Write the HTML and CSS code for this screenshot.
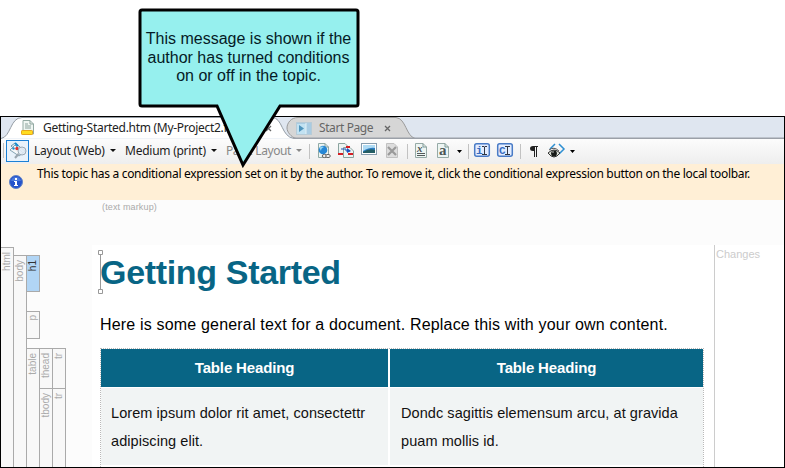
FILE: index.html
```html
<!DOCTYPE html>
<html lang="en">
<head>
<meta charset="utf-8">
<title>Getting-Started.htm</title>
<link rel="stylesheet" href="styles.css">
</head>
<body>
<div class="window">
  <div class="tabs">
    <svg class="tab-shapes" width="783" height="22" viewBox="0 0 783 22">
      <path d="M295 21.500C290 20 286 15 286 11C286 6 290 .5 297 .5H395C405 1.500 405 19 414 21.500" fill="#d6d6d6" stroke="#9a9a9a"/>
      <path d="M0 21.500C10 20 9 .5 21 .5H271C282 .5 280 20 293 21.500" fill="#fff" stroke="#939ba3"/>
      <path d="M293 21.500H783" stroke="#9ba0a8" stroke-width="2"/>
    </svg>
    <div class="tab first">
      <svg width="14" height="17" viewBox="0 0 14 17"><path d="M2 .5H9L12.500 4V14H2Z" fill="#f0f6f2" stroke="#93aaa3"/><path d="M9 .5V4H12.500M4 4H7M4 6H10M4 8H10" fill="none" stroke="#8ca39d"/><rect x=".5" y="10.500" width="11" height="4" rx=".7" fill="#ffdc20" stroke="#e6a51b"/></svg>
      <span class="t1">Getting-Started.htm (My-Project2.flprj)</span>
      <svg class="close" width="7" height="7" viewBox="0 0 7 7"><path d="M1 1L6 6M6 1L1 6" stroke="#666" stroke-width="1.300"/></svg>
    </div>
    <div class="tab second">
      <svg width="16" height="13" viewBox="0 0 16 13"><rect x=".5" y=".5" width="15" height="12" fill="#a9cce3" stroke="#b7cbd7"/><path d="M1 2H10V12H1Z" fill="#c2e2f2"/><path d="M3 3L8 6.500L3 10Z" fill="#5095bd"/><path d="M10 1V12" stroke="#e3f0f6"/></svg>
      <span class="t2">Start Page</span>
      <svg class="close" width="7" height="7" viewBox="0 0 7 7"><path d="M1 1L6 6M6 1L1 6" stroke="#666" stroke-width="1.300"/></svg>
    </div>
  </div>
  <div class="toolbar">
    <i class="grip"></i>
    <span class="toggle"><svg width="20" height="19" viewBox="0 0 20 19"><path d="M3 5L7 2L17 10L13 14Z" fill="#e2eef4" stroke="#719aaf"/><path d="M2 9L7 4L15 12L11 15Z" fill="#f5f8fa" stroke="#84a3b2"/><path d="M7 2L10 5" stroke="#168bd0" stroke-width="2"/><circle cx="5.500" cy="7.500" r="1.200" fill="#218cca"/><circle cx="9" cy="7.500" r="1.700" fill="#df352e"/><circle cx="14" cy="10" r="4" fill="#e1ebf5" fill-opacity=".9" stroke="#9aa9b5"/><path d="M10.500 13L7 17" stroke="#9aa6af" stroke-width="2"/></svg></span>
    <span class="label l1">Layout (Web)</span><i class="arrow a1"></i>
    <span class="label l2">Medium (print)</span><i class="arrow a2"></i>
    <span class="label l3">Page Layout</span><i class="arrow a3"></i>
    <svg class="icons" width="270" height="20" viewBox="308 141 270 20">
      <g fill="none" stroke="#c2c2c2"><path d="M309.500 144V159M407.500 144V159M468.500 144V159M520.500 144V159"/></g>
      <path d="M318.500 143.500H325L328.500 147V157.500H318.500Z" fill="#eef5f3" stroke="#91aaa6"/><path d="M325 143.500V147H328.500" fill="none" stroke="#829b98"/><circle cx="323" cy="150" r="4.300" fill="#2687d5"/><path d="M319.500 148Q321 145.500 324 147Q321 148 321 151Z" fill="#96d8f5"/><g fill="#eee" stroke="#666"><ellipse cx="324.500" cy="156" rx="2.300" ry="1.600"/><ellipse cx="328" cy="156" rx="2.300" ry="1.600"/></g>
      <path d="M338.500 143.500H345L348.500 147V153.500H338.500Z" fill="#edf3f2" stroke="#8ba49f"/><path d="M343.500 147.500H350L353.500 151V157.500H343.500Z" fill="#edf3f2" stroke="#8ba49f"/><path d="M341 149H346V151H350" fill="none" stroke="#1b54bd"/><path d="M347 148L351 151L347 153Z" fill="#1b54bd"/><path d="M338 154H343M346 147H350M348 154H353" stroke="#d51f25" stroke-width="2"/>
      <rect x="361.500" y="143.500" width="15" height="11" fill="#fff" stroke="#879dae"/><rect x="363" y="145" width="12" height="8" fill="#2b7dc3"/><path d="M363 145H375V148Q370 147 363 151Z" fill="#afdbf4"/><path d="M363 152Q369 148 375 150V153H363Z" fill="#245e65"/>
      <path d="M386.500 143.500H394L397.500 147V157.500H386.500Z" fill="#ddd" stroke="#c1c1c1"/><path d="M388 147L396 155M396 147L388 155" stroke="#999" stroke-width="2.200"/>
      <path d="M415.500 143.500H423L426.500 147V157.500H415.500ZM437.500 143.500H445L448.500 147V157.500H437.500Z" fill="#edf5f3" stroke="#96aaa6"/><path d="M423 143.500V147H426.500M445 143.500V147H448.500" fill="none" stroke="#7c9793"/>
      <text class="glyph x" x="417" y="152">x</text><path d="M417 153.500H425M417 155.500H425" stroke="#525a5a"/>
      <text class="glyph a" x="439" y="155">a</text>
      <path d="M457 150H462L459.500 153ZM570 150H575L572.500 153Z" fill="#000"/>
      <g fill="#e3edff" stroke="#497bc6" stroke-width="1.500"><rect x="474.700" y="143.700" width="14.600" height="12.600" rx="2"/><rect x="497.700" y="143.700" width="14.600" height="12.600" rx="2"/></g>
      <text class="glyph blue" x="476" y="154">i</text><text class="glyph blue" x="499" y="154">C</text>
      <path d="M482 146.500H484L484.500 147L485 146.500H487M484.500 147V154M482 154.500H487M505 146.500H510M507.500 147V154M505 154.500H510" fill="none" stroke="#303743"/>
      <path d="M538 146.500H533M534.500 146V157M536.500 146V157" stroke="#222" fill="none"/><path d="M535 146H533Q530 146 530 148.500Q530 151 533 151H535Z" fill="#222"/>
      <path d="M555 144L550 149M559 144L564 149L559 154" fill="none" stroke="#2e8fd2" stroke-width="1.500"/><path d="M548 153Q554 147 560 153Q554 161 548 153Z" fill="#d9ddd4" stroke="#333"/><circle cx="554" cy="153.500" r="2.900" fill="#171a17"/><circle cx="553" cy="152" r=".7" fill="#fff"/><path d="M549 150Q554 146 559 151" stroke="#555" fill="none"/>
    </svg>
  </div>
  <div class="notice">
    <svg width="14" height="14" viewBox="0 0 14 14"><circle cx="7" cy="7" r="6.500" fill="#2553cb" stroke="#6284c6"/><path d="M2 6Q3 2 7 2Q11 2 12 6" fill="#4b79dc"/><rect x="6" y="3" width="2" height="2" fill="#fff"/><path d="M5 6H8V10H9V11H5V10H6V7H5Z" fill="#fff"/></svg>
    <span>This topic has a conditional expression set on it by the author. To remove it, click the conditional expression button on the local toolbar.</span>
  </div>
  <div class="editor">
    <div class="markup"><span>(text markup)</span></div>
    <div class="work">
      <div class="structure">
        <div class="tag html">html</div>
        <div class="tag body">body</div>
        <div class="blocks">
          <div class="tag h1">h1</div>
          <div class="tag p">p</div>
          <div class="table-tags">
            <div class="tag table">table</div>
            <div class="sections">
              <div class="head-tags"><div class="tag">thead</div><div class="tag">tr</div></div>
              <div class="body-tags"><div class="tag">tbody</div><div class="tag">tr</div></div>
            </div>
          </div>
        </div>
      </div>
      <div class="page">
        <svg class="caret" width="5" height="44" viewBox="0 0 5 44"><path d="M2.500 4V40M.5 .5H4.500V4.500H.5ZM.5 39.500H4.500V43.500H.5Z" fill="#fff" stroke="#999"/></svg>
        <h1>Getting Started</h1>
        <p>Here is some general text for a document. Replace this with your own content.</p>
        <div class="grid">
          <div class="cell head">Table Heading</div><div class="cell head">Table Heading</div>
          <div class="cell"><span class="c1">Lorem ipsum dolor rit amet, consectettr</span><br><span class="c2">adipiscing elit.</span></div>
          <div class="cell right"><span class="c3">Dondc sagittis elemensum arcu, at gravida</span><br><span class="c4">puam mollis id.</span></div>
        </div>
      </div>
      <div class="changes">Changes</div>
    </div>
  </div>
</div>
<div class="callout">
  <svg width="222" height="160" viewBox="0 0 222 160"><path d="M4 2H218Q220 2 220 4V96Q220 98 218 98H142L105 157L79 98H4Q2 98 2 96V4Q2 2 4 2Z" fill="#96f0ee" stroke="#000" stroke-width="3"/></svg>
  <div class="callout-text"><span>This message is shown if the</span><br><span>author has turned conditions</span><br><span>on or off in the topic.</span></div>
</div>
</body>
</html>
```
FILE: styles.css
```css
* { box-sizing: border-box; }
body { margin: 0; width: 785px; height: 468px; overflow: hidden; padding-top: 116px; background: #fff; position: relative; font-family: "Liberation Sans", sans-serif; }
svg { display: block; flex: none; }
.window { width: 785px; height: 352px; border: 1px solid #000; display: flex; flex-direction: column; overflow: hidden; }
.tabs { height: 22px; flex: none; background: #dfe6f0; display: flex; position: relative; font: 12px/22px "Noto Sans", sans-serif; white-space: nowrap; }
.tab-shapes { position: absolute; left: 0; top: 0; }
.tab { position: relative; display: flex; align-items: center; height: 22px; }
.first { width: 275px; padding-left: 20px; color: #222; }
.first span { margin-left: 8px; width: 213px; overflow: hidden; }
.first .close { margin-left: 9px; }
.second { padding-left: 20px; color: #666; }
.second span { width: 56px; margin-left: 7px; }
.second .close { margin-left: 9px; }
.t1 { letter-spacing: -.29px; }
.t2 { letter-spacing: -.4px; }
.toolbar { height: 25px; flex: none; background: linear-gradient(#fcfcfc, #eee); display: flex; align-items: center; padding-bottom: 2px; font: 12px/23px "Noto Sans", sans-serif; color: #1c1c1c; white-space: nowrap; }
.grip { width: 1px; height: 15px; background: #c2c2c2; margin-left: 2px; }
.toggle { width: 23px; height: 22px; border: 1px solid #1b80d5; background: #e8f2fb; margin-left: 2px; display: grid; place-items: center; flex: none; }
.label { flex: none; }
.l1 { width: 76px; margin-left: 5px; letter-spacing: -.24px; }
.l2 { width: 86px; margin-left: 9px; letter-spacing: -.25px; }
.l3 { width: 70px; margin-left: 9px; color: #888; letter-spacing: -.4px; }
.arrow { border: 3px solid transparent; border-top-color: #111; border-bottom: 0; width: 6px; flex: none; }
.a3 { border-top-color: #888; margin-right: 6px; }
.glyph { font: bold 11px "Liberation Serif", serif; fill: #4c5555; }
.glyph.x { font-style: italic; }
.glyph.a { font-size: 15px; }
.glyph.blue { font: bold 11px "Liberation Mono", monospace; fill: #386dc0; }
.notice { height: 36px; flex: none; background: #ffefd6; display: flex; align-items: flex-start; padding: 0 0 0 8px; font: 12px/20px "Noto Sans", sans-serif; color: #000; }
.notice svg { margin-top: 11px; }
.notice span { margin-left: 14px; white-space: nowrap; letter-spacing: -.305px; }
.editor { flex: 1; background: #fcfcfc; min-height: 0; }
.markup { height: 45px; padding: 2px 0 0 101px; font-size: 9px; line-height: 11px; color: #aaa; letter-spacing: .15px; }
.work { display: flex; height: 222px; }
.structure { width: 91px; display: flex; align-items: flex-start; padding-top: 2px; font-size: 10px; color: #aaa; }
.tag { width: 13px; flex: none; border: 1px solid #aaa; border-width: 1px 1px 0 0; line-height: 11px; padding-top: 4px; writing-mode: sideways-lr; text-align: right; background: #f8f8f8; }
.tag.html { height: 220px; }
.tag.body { height: 212px; margin-top: 8px; }
.blocks { margin-top: 8px; display: flex; flex-direction: column; }
.tag.h1 { height: 37px; background: #b1d5f5; border-bottom-width: 1px; color: #333; }
.tag.p { height: 28px; margin-top: 19px; border-bottom-width: 1px; padding-top: 3px; }
.table-tags { display: flex; margin-top: 9px; }
.tag.table { height: 119px; }
.head-tags { display: flex; height: 40px; }
.body-tags { display: flex; height: 79px; }
.page { width: 622px; background: #fff; padding: 10px 0 0 8px; position: relative; }
.caret { position: absolute; left: 6px; top: 5px; }
h1 { margin: 0; font-size: 34px; line-height: 34px; color: #086585; letter-spacing: -.32px; white-space: nowrap; }
.page p { margin: 26px 0 0; font-size: 16px; line-height: 20px; color: #000; white-space: nowrap; letter-spacing: .18px; }
.grid { width: 604px; height: 119px; margin-top: 13px; border: 1px dotted #b9b9b9; border-bottom: 0; display: grid; grid-template-columns: 287px 313px; grid-template-rows: 38px 77px; gap: 1px 2px; }
.cell { background: #f1f4f4; padding: 11px 10px; font-size: 14.500px; line-height: 28px; color: #111; white-space: nowrap; letter-spacing: .07px; }
.right { padding-left: 11px; }
.head { padding: 0; background: #086585; color: #fff; font-weight: bold; font-size: 15px; line-height: 38px; text-align: center; letter-spacing: -.15px; }
.changes { width: 70px; background: #fff; border-left: 1px solid #ccc; color: #ccc; font-size: 11px; line-height: 18px; padding-left: 1px; }
.callout { position: absolute; left: 138px; top: 8px; width: 222px; height: 160px; }
.callout-text { position: absolute; left: 0; top: 22px; width: 221px; text-align: center; font-size: 16px; line-height: 18.500px; white-space: nowrap; color: #051b26; }
```
